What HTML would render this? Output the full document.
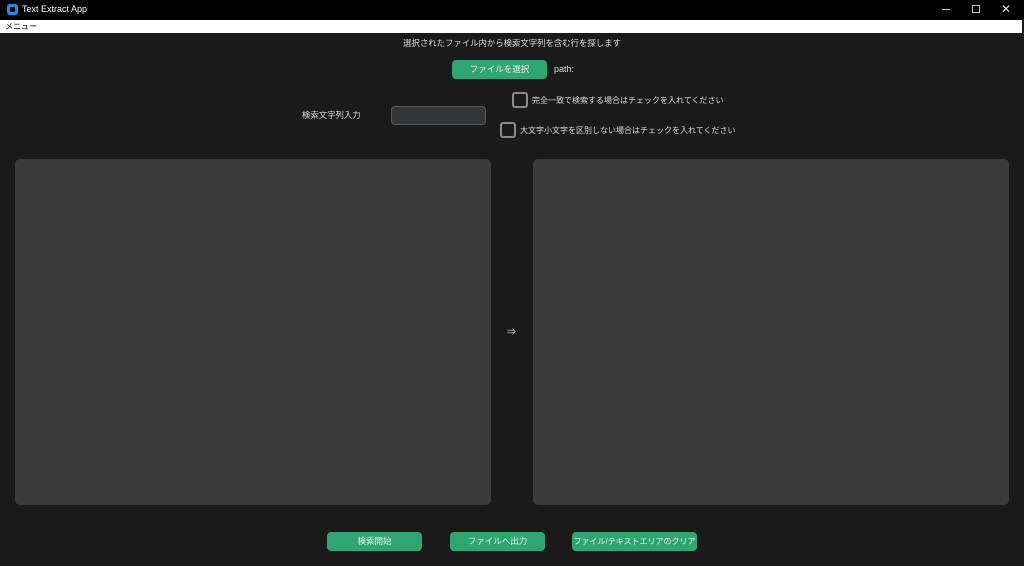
<!DOCTYPE html><html><head><meta charset="utf-8"><style>
*{margin:0;padding:0;box-sizing:border-box}
body{width:1024px;height:566px;background:#1a1a1a;font-family:"Liberation Sans","Noto Sans CJK JP",sans-serif;color:#dcdcdc;position:relative;overflow:hidden;font-size:8px}
.a{position:absolute;white-space:nowrap}
.btn{position:absolute;background:#2fa572;border-radius:4px;color:#e8f5ee;font-size:8.5px;text-align:center;white-space:nowrap}
.cb{position:absolute;width:16px;height:16px;border:2px solid #8a8a8a;border-radius:3px}
.ta{position:absolute;background:#3a3a3a;border-radius:5px}
</style></head><body>
<div class="a" style="left:0;top:0;width:1024px;height:20px;background:#000"></div>
<div class="a" style="left:7px;top:4px;width:11px;height:11px;background:#1e8fe0;border-radius:3px"></div>
<div class="a" style="left:10px;top:7px;width:5px;height:5px;background:#000;border-radius:1px"></div>
<div class="a" style="left:22px;top:4px;color:#fff;font-size:9px">Text Extract App</div>
<div class="a" style="left:942px;top:9px;width:8px;height:1px;background:#ccc"></div>
<div class="a" style="left:972px;top:5px;width:8px;height:8px;border:1px solid #ccc"></div>
<div class="a" style="left:1001px;top:2px;color:#ddd;font-size:12px">✕</div>
<div class="a" style="left:0;top:20px;width:1022px;height:13px;background:#fff;color:#000;font-size:8px;padding:1px 5px">メニュー</div>
<div class="a" style="left:0;width:1024px;text-align:center;font-size:8.4px;top:37px">選択されたファイル内から検索文字列を含む行を探します</div>
<div class="btn" style="left:452px;top:60px;width:95px;height:19px;line-height:19px">ファイルを選択</div>
<div class="a" style="left:554px;top:64px;font-size:9px">path:</div>
<div class="a" style="left:302px;top:109px;font-size:8.4px">検索文字列入力</div>
<div class="a" style="left:391px;top:106px;width:95px;height:19px;background:#343638;border:1px solid #565b5e;border-radius:4px"></div>
<div class="cb" style="left:512px;top:92px"></div>
<div class="a" style="left:532px;top:95px">完全一致で検索する場合はチェックを入れてください</div>
<div class="cb" style="left:500px;top:122px"></div>
<div class="a" style="left:520px;top:125px">大文字小文字を区別しない場合はチェックを入れてください</div>
<div class="ta" style="left:15px;top:159px;width:476px;height:346px"></div>
<div class="ta" style="left:533px;top:159px;width:476px;height:346px"></div>
<div class="a" style="left:507px;top:325px;font-size:9px">⇒</div>
<div class="btn" style="left:327px;top:532px;width:95px;height:19px;line-height:19px">検索開始</div>
<div class="btn" style="left:450px;top:532px;width:95px;height:19px;line-height:19px">ファイルへ出力</div>
<div class="btn" style="left:572px;top:532px;width:125px;height:19px;line-height:19px;font-size:8px">ファイル/テキストエリアのクリア</div>
</body></html>
